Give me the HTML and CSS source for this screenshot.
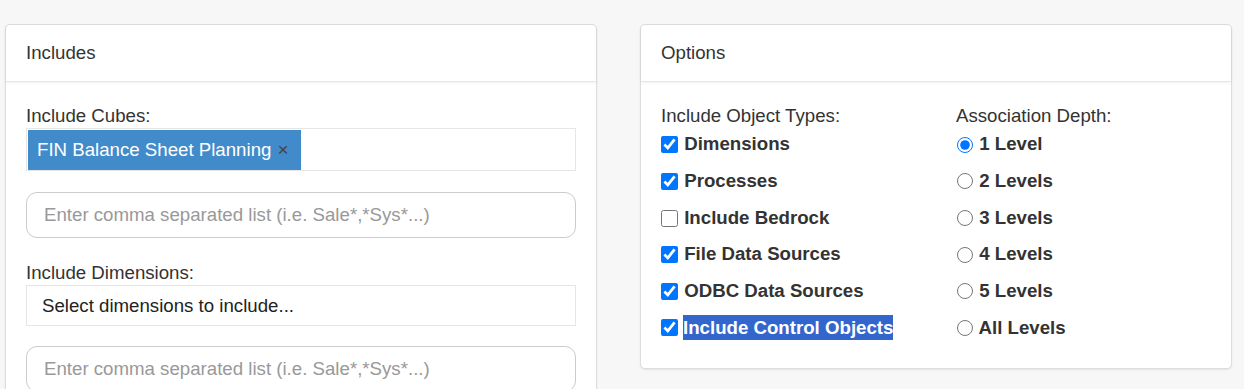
FILE: index.html
```html
<!DOCTYPE html>
<html lang="en">
<head>
    <meta charset="UTF-8">
    <meta name="viewport" content="width=device-width, initial-scale=1.0">
    <title>Export Options</title>
    <link rel="stylesheet" href="styles.css">
</head>
<body>
    <div class="page">
        <div class="panel">
            <div class="panel-heading">Includes</div>
            <div class="panel-body">
                <div class="form-group form-group-first">
                    <label class="field-label">Include Cubes:</label>
                    <div class="tag-box">
                        <span class="tag">FIN Balance Sheet Planning<span class="tag-remove">&times;</span></span>
                    </div>
                </div>
                <div class="form-group form-group-wide">
                    <input class="text-input" type="text" placeholder="Enter comma separated list (i.e. Sale*,*Sys*...)">
                </div>
                <div class="form-group">
                    <label class="field-label">Include Dimensions:</label>
                    <div class="select-box">Select dimensions to include...</div>
                </div>
                <div class="form-group">
                    <input class="text-input" type="text" placeholder="Enter comma separated list (i.e. Sale*,*Sys*...)">
                </div>
            </div>
        </div>

        <div class="panel">
            <div class="panel-heading">Options</div>
            <div class="panel-body options">
                <div class="option-col">
                    <label class="field-label">Include Object Types:</label>
                    <label class="check"><input type="checkbox" checked> Dimensions</label>
                    <label class="check"><input type="checkbox" checked> Processes</label>
                    <label class="check"><input type="checkbox"> Include Bedrock</label>
                    <label class="check"><input type="checkbox" checked> File Data Sources</label>
                    <label class="check"><input type="checkbox" checked> ODBC Data Sources</label>
                    <label class="check"><input type="checkbox" checked> <span class="selected-text">Include Control Objects</span></label>
                </div>
                <div class="option-col">
                    <label class="field-label">Association Depth:</label>
                    <label class="check"><input type="radio" name="depth" checked> 1 Level</label>
                    <label class="check"><input type="radio" name="depth"> 2 Levels</label>
                    <label class="check"><input type="radio" name="depth"> 3 Levels</label>
                    <label class="check"><input type="radio" name="depth"> 4 Levels</label>
                    <label class="check"><input type="radio" name="depth"> 5 Levels</label>
                    <label class="check"><input type="radio" name="depth"> All Levels</label>
                </div>
            </div>
        </div>
    </div>
</body>
</html>
```

FILE: styles.css
```css
body {
    margin: 0;
    font-family: "Liberation Sans", Arial, sans-serif;
    font-size: 18.67px;
    line-height: 26.67px;
    color: #333333;
    background-color: #f7f7f7;
}

.page {
    display: grid;
    grid-template-columns: 1fr 1fr;
    column-gap: 43px;
    align-items: start;
    padding: 24px 12px 0 5px;
}

.panel {
    background-color: #ffffff;
    border: 1px solid #dddddd;
    border-radius: 5px;
    box-shadow: 0 1px 2px rgba(0, 0, 0, 0.08);
}

.panel-heading {
    padding: 15px 20px 14px;
    border-bottom: 1px solid #e6e6e6;
    box-shadow: 0 1px 3px rgba(0, 0, 0, 0.06);
}

.panel-body {
    padding: 21px 20px 20px;
}

.form-group {
    margin-bottom: 19.5px;
}

.form-group-first {
    margin-bottom: 20.5px;
}

.form-group-wide {
    margin-bottom: 22.5px;
}

.field-label {
    display: block;
}

.tag-box {
    box-sizing: border-box;
    height: 43px;
    margin-top: -1px;
    border: 1px solid #e6e6e6;
    padding: 1px;
}

.tag {
    display: inline-block;
    height: 40px;
    line-height: 40px;
    padding: 0 12px 0 9px;
    background-color: #428bca;
    color: #ffffff;
}

.tag-remove {
    margin-left: 6px;
    color: #444444;
    font-size: 19px;
}

.text-input {
    display: block;
    box-sizing: border-box;
    width: 100%;
    height: 46px;
    padding: 0 17px;
    border: 1px solid #cccccc;
    border-radius: 11px;
    font-family: inherit;
    font-size: 18.67px;
    color: #555555;
    outline: none;
}

.text-input::placeholder {
    color: #999999;
}

.select-box {
    box-sizing: border-box;
    height: 41px;
    line-height: 39px;
    margin-top: -2px;
    padding: 0 15px;
    border: 1px solid #e6e6e6;
    color: #222222;
}

.options {
    display: grid;
    grid-template-columns: 1fr 1fr;
    column-gap: 40px;
    padding-bottom: 27px;
}

.option-col .field-label {
    margin-bottom: 2px;
}

.check {
    display: flex;
    align-items: center;
    font-weight: bold;
    margin-bottom: 10px;
    white-space: pre;
}

.check:last-child {
    margin-bottom: 0;
}

.check input {
    width: 17px;
    height: 17px;
    margin: 0 1px 0 0;
    accent-color: #0075ff;
}

.check input[type="radio"] {
    width: 16px;
    height: 16px;
    margin-left: 1px;
}

.selected-text {
    display: inline-block;
    margin-left: 4px;
    line-height: 25px;
    background-color: #3366cc;
    color: #ffffff;
}
```
